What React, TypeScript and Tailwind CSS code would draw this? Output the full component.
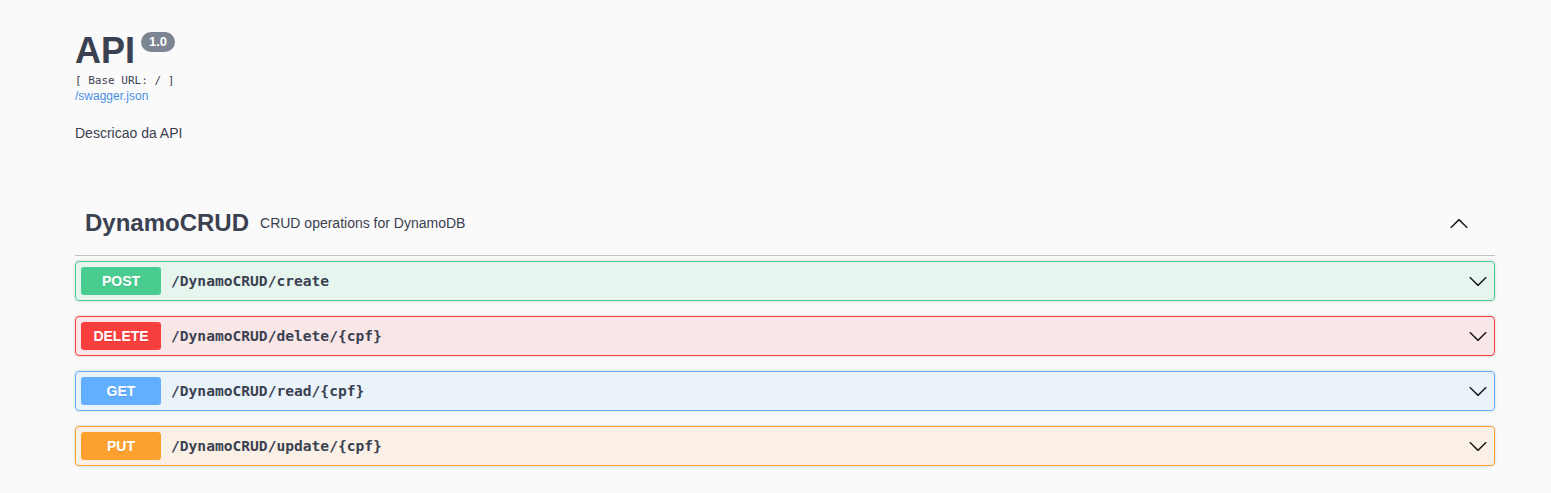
import React from 'react'

type Op = {
  method: string
  path: string
  badge: string
  border: string
  bg: string
}

const ops: Op[] = [
  { method: 'POST', path: '/DynamoCRUD/create', badge: 'bg-[#49cc90]', border: 'border-[#49cc90]', bg: 'bg-[#49cc90]/10' },
  { method: 'DELETE', path: '/DynamoCRUD/delete/{cpf}', badge: 'bg-[#f93e3e]', border: 'border-[#f93e3e]', bg: 'bg-[#f93e3e]/10' },
  { method: 'GET', path: '/DynamoCRUD/read/{cpf}', badge: 'bg-[#61affe]', border: 'border-[#61affe]', bg: 'bg-[#61affe]/10' },
  { method: 'PUT', path: '/DynamoCRUD/update/{cpf}', badge: 'bg-[#fca130]', border: 'border-[#fca130]', bg: 'bg-[#fca130]/10' },
]

const ArrowDown = () => (
  <svg width="20" height="20" viewBox="0 0 20 20" className="fill-[#1a1a1a]">
    <path d="M17.418 6.109c.272-.268.709-.268.979 0s.271.701 0 .969l-7.908 7.83c-.27.268-.707.268-.979 0l-7.908-7.830c-.27-.268-.27-.701 0-.969.271-.268.709-.268.979 0L10 13.25l7.418-7.141z" />
  </svg>
)

const ArrowUp = () => (
  <svg width="20" height="20" viewBox="0 0 20 20" className="fill-[#1a1a1a]">
    <path d="M17.418 14.908c.272.268.709.268.979 0s.271-.701 0-.969l-7.908-7.83c-.27-.268-.707-.268-.979 0l-7.908 7.83c-.27.268-.27.701 0 .969.271.268.709.268.979 0L10 7.767l7.418 7.141z" />
  </svg>
)

const OpBlock: React.FC<{ op: Op }> = ({ op }) => (
  <div className={`mb-[15px] rounded-[4px] border ${op.border} ${op.bg} shadow-[0_0_3px_rgba(0,0,0,0.19)]`}>
    <div className="flex h-[38px] items-center pl-[5px] pr-[6px]">
      <span
        className={`${op.badge} flex h-[28px] w-[80px] items-center justify-center rounded-[3px] text-[14px] font-bold text-white [text-shadow:0_1px_0_rgba(0,0,0,0.1)]`}
      >
        {op.method}
      </span>
      <span className="flex-1 px-[10px] font-['DejaVu_Sans_Mono',monospace] text-[14.6px] font-semibold text-[#3b4151]">
        {op.path}
      </span>
      <ArrowDown />
    </div>
  </div>
)

export default function App() {
  return (
    <div className="min-h-screen bg-[#fafafa] font-['Liberation_Sans',Arial,sans-serif] text-[#3b4151]">
      <div className="pl-[75px] pr-[56px]">
        <div className="pt-[28px]">
          <div className="flex items-start">
            <h2 className="text-[36px] font-bold leading-[45px]">API</h2>
            <span className="ml-[6px] mt-[4px] rounded-full bg-[#7d8492] px-[8px] text-[13px] font-bold leading-[20px] text-white">
              1.0
            </span>
          </div>
          <div className="mt-[1px] font-['DejaVu_Sans_Mono',monospace] text-[11px] leading-[14px]">[ Base URL: / ]</div>
          <div className="text-[12px] leading-[16px] text-[#4990e2]">/swagger.json</div>
          <div className="mt-[20px] text-[14px] leading-[18px]">Descricao da API</div>
        </div>

        <div className="mt-[50px]">
          <div className="flex h-[64px] items-center border-b border-[#3b4151]/30 pb-[1px] pl-[10px] pr-[26px]">
            <span className="text-[24px] font-bold">DynamoCRUD</span>
            <span className="ml-[11px] flex-1 text-[14px]">CRUD operations for DynamoDB</span>
            <ArrowUp />
          </div>
          <div className="mt-[5px]">
            {ops.map((op) => (
              <OpBlock key={op.method} op={op} />
            ))}
          </div>
        </div>
      </div>
    </div>
  )
}
